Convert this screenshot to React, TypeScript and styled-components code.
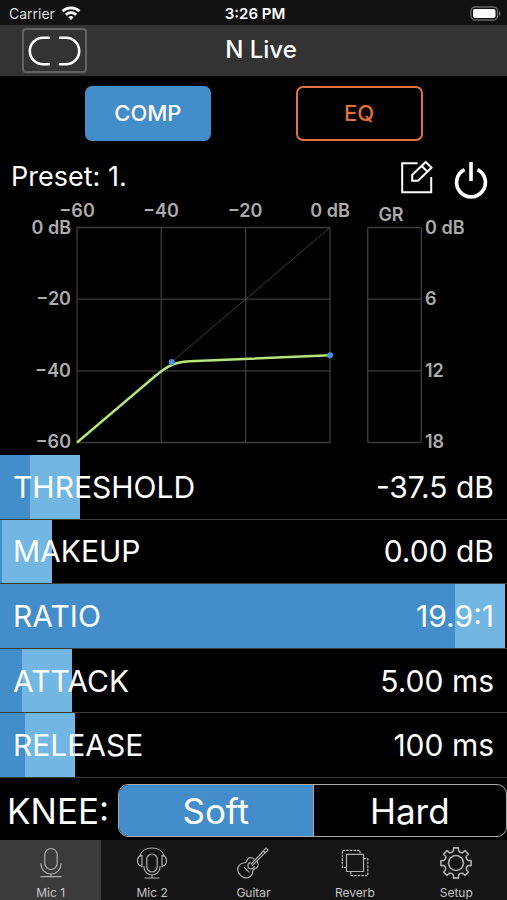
import React, { useState } from 'react';
import styled, { createGlobalStyle, css } from 'styled-components';

const BLUE = '#438dcb';
const LIGHT_BLUE = '#72b6e4';
const ORANGE = '#e2703a';

const GlobalStyle = createGlobalStyle`
  *, *::before, *::after { box-sizing: border-box; }
  body {
    margin: 0;
    background: #000;
    color: #fff;
    font-family: Inter, "Liberation Sans", sans-serif;
  }
  button, input { font: inherit; color: inherit; margin: 0; }
`;

const Page = styled.div`
  display: flex;
  flex-direction: column;
  min-height: 100vh;
`;

const StatusBar = styled.div`
  display: grid;
  grid-template-columns: 1fr auto 1fr;
  align-items: center;
  height: 25px;
  padding: 2px 6px 0 9px;
  background: #121212;
  font-size: 14px;
  line-height: 20px;
`;

const Carrier = styled.div`
  display: flex;
  align-items: center;
  gap: 6px;
  color: #ddd;
`;

const Clock = styled.time`
  font-size: 15px;
  font-weight: 600;
`;

const BatterySlot = styled.div`
  display: flex;
  justify-content: flex-end;
`;

const Header = styled.header`
  display: grid;
  grid-template-columns: 1fr auto 1fr;
  align-items: center;
  height: 51px;
  padding: 0 7px 0 22px;
  background: #333;
`;

const LinkButton = styled.button`
  display: flex;
  align-items: center;
  justify-content: center;
  justify-self: start;
  width: 65px;
  height: 45px;
  padding: 0;
  border: 2px solid #646464;
  border-radius: 4px;
  background: transparent;
`;

const Title = styled.h1`
  margin: 0;
  padding-bottom: 2px;
  font-size: 24px;
  line-height: 32px;
  font-weight: 500;
`;

const ModeRow = styled.div`
  display: flex;
  justify-content: space-evenly;
  padding: 10px 0 14px;
`;

const ModeButton = styled.button<{ $active: boolean }>`
  width: 25%;
  height: 55px;
  padding: 0 0 2px;
  border: 2px solid ${p => (p.$active ? BLUE : ORANGE)};
  border-radius: 7px;
  background: ${p => (p.$active ? BLUE : 'transparent')};
  color: ${p => (p.$active ? '#fff' : ORANGE)};
  font-size: 22px;
  font-weight: 500;
`;

const PresetRow = styled.div`
  display: flex;
  align-items: center;
  gap: 20px;
  height: 44px;
  padding: 0 19px 0 11px;
`;

const PresetName = styled.div`
  flex: 1;
  font-size: 27px;
  line-height: 36px;
`;

const IconButton = styled.button`
  display: flex;
  padding: 0;
  border: 0;
  background: none;
`;

const Chart = styled.svg`
  display: block;
  width: 100%;
  height: auto;
  overflow: visible;
`;

const AxisText = styled.text`
  fill: #acacac;
  font-size: 18px;
  font-weight: 600;
`;

const Sliders = styled.div`
  flex: 1;
  display: grid;
  grid-auto-rows: 1fr;
`;

const SliderRow = styled.div`
  display: grid;
  min-height: 56px;
  border-bottom: 1px solid #3a3a3a;
  > * { grid-area: 1 / 1; }
`;

const thumb = css`
  width: 52px;
  height: 100%;
  border: 0;
  border-left: 2px solid ${BLUE};
  border-radius: 0;
  background: ${LIGHT_BLUE};
`;

const Range = styled.input`
  -webkit-appearance: none;
  appearance: none;
  width: 100%;
  height: 100%;
  cursor: pointer;
  background: linear-gradient(
    to right,
    ${BLUE} calc((100% - 52px) * var(--level)),
    transparent 0
  );
  &::-webkit-slider-runnable-track { height: 100%; }
  &::-webkit-slider-thumb { -webkit-appearance: none; ${thumb} }
  &::-moz-range-thumb { ${thumb} }
`;

const SliderCaption = styled.div`
  z-index: 1;
  display: flex;
  align-items: center;
  justify-content: space-between;
  padding: 0 13px;
  font-size: 30px;
  line-height: 40px;
  pointer-events: none;
`;

const KneeGroup = styled.fieldset`
  display: grid;
  grid-template-columns: 118px 1fr;
  align-items: center;
  margin: 0;
  padding: 6px 0 3px;
  border: 0;
`;

const KneeLabel = styled.span`
  padding-left: 7px;
  font-size: 35px;
  line-height: 48px;
`;

const Segments = styled.div`
  display: grid;
  grid-template-columns: 1fr 1fr;
  height: 53px;
  overflow: hidden;
  border: 1px solid #aaa;
  border-radius: 10px;
`;

const Segment = styled.label`
  display: flex;
  align-items: center;
  justify-content: center;
  font-size: 35px;
  cursor: pointer;
  &:has(input:checked) { background: ${BLUE}; }
  & + & { border-left: 1px solid #aaa; }
`;

const HiddenRadio = styled.input`
  appearance: none;
  width: 0;
  height: 0;
`;

const TabBar = styled.nav`
  display: grid;
  grid-template-columns: repeat(5, 1fr);
  height: 60px;
  background: #151515;
`;

const Tab = styled.button<{ $active: boolean }>`
  display: flex;
  flex-direction: column;
  align-items: center;
  gap: 6px;
  padding: 7px 0 0;
  border: 0;
  background: ${p => (p.$active ? '#3b3b3b' : 'transparent')};
  color: #c4c4c4;
  font-size: 12px;
  line-height: 16px;
`;

const TabIcon = styled.svg`
  width: 32px;
  height: 32px;
  fill: none;
  stroke: #b0b0b0;
  stroke-width: 1.2;
  stroke-linecap: round;
  stroke-linejoin: round;
`;

const gearPath = (() => {
  const teeth = 8;
  const points: string[] = [];
  const at = (r: number, deg: number) => {
    const a = (deg * Math.PI) / 180;
    return `${(16 + r * Math.sin(a)).toFixed(2)} ${(16 - r * Math.cos(a)).toFixed(2)}`;
  };
  for (let i = 0; i < teeth; i++) {
    const c = (i * 360) / teeth;
    points.push(`${i ? 'L' : 'M'}${at(12.4, c - 12)}L${at(15.3, c - 9)}L${at(15.3, c + 9)}L${at(12.4, c + 12)}`);
    points.push(`Q${at(10.6, c + 22.5)} ${at(12.4, c + 33)}`);
  }
  return points.join('') + 'Z';
})();

const tabs = [
  {
    name: 'Mic 1',
    art: (
      <>
        <rect x="9.8" y="1.5" width="12.4" height="21" rx="6.2" />
        <path d="M6 16.5v.5a10 10 0 0 0 20 0v-.5M16 27v2.7M6 29.7h20" />
      </>
    ),
  },
  {
    name: 'Mic 2',
    art: (
      <>
        <rect x="10.8" y="7" width="10.4" height="18" rx="5.2" />
        <path d="M8 19.5v.5a8 8 0 0 0 16 0v-.5M16 28v3M9 31h14" />
        <path d="M4.2 8.6C5.5 3.6 10.5 1 16 1s10.5 2.6 11.8 7.6" />
        <path d="M6 8.3C3.2 8.6 1.5 10.5 1.5 13.8S3.2 19 6 19.3zM26 8.3c2.8.3 4.5 2.2 4.5 5.5s-1.7 5.2-4.5 5.5z" />
      </>
    ),
  },
  {
    name: 'Guitar',
    art: (
      <>
        <path d="M17 12.2C15 10.2 12.3 10.3 10.8 12c-1.2 1.4-.8 2.8-2.3 3.5-1.7.8-3.7.2-5.7 2.1-3.1 2.8-2.6 7.4.5 10.6s7.8 3.7 10.7.6c2-2.1 1.3-4.2 2.2-5.8.8-1.5 2.3-1.1 3.6-2.3 1.7-1.6 1.8-4.3.1-6.2" />
        <path d="M14.2 17 26.5 4l2.4-3 2.2 2.2-3 2.6-12.6 12.6" />
        <path d="M13.2 15.6a3.2 3.2 0 1 0 4 3.8M7.4 20.6l4.6 4.6M26.5 4l1.6 1.8" />
      </>
    ),
  },
  {
    name: 'Reverb',
    art: (
      <>
        <rect x="7.5" y="7.3" width="17" height="17.2" />
        <path strokeDasharray="1.7 1.9" d="M7 20.5H3.3V3.3H21V7" />
        <path strokeDasharray="1.7 1.9" d="M25 11.6h3.8v17H11.8V25" />
      </>
    ),
  },
  {
    name: 'Setup',
    art: (
      <>
        <path strokeWidth="1.6" d={gearPath} />
        <circle strokeWidth="1.6" cx="16" cy="16" r="7.5" />
      </>
    ),
  },
];

type Param = {
  id: string;
  label: string;
  min: number;
  max: number;
  step: number;
  start: number;
  format: (v: number) => string;
};

const params: Param[] = [
  { id: 'threshold', label: 'THRESHOLD', min: -40, max: 0, step: 0.5, start: -37.5, format: v => `${v.toFixed(1)} dB` },
  { id: 'makeup', label: 'MAKEUP', min: 0, max: 30, step: 0.25, start: 0, format: v => `${v.toFixed(2)} dB` },
  { id: 'ratio', label: 'RATIO', min: 1, max: 20, step: 0.1, start: 19.9, format: v => `${v.toFixed(1)}:1` },
  { id: 'attack', label: 'ATTACK', min: 1, max: 92, step: 0.5, start: 5, format: v => `${v.toFixed(2)} ms` },
  { id: 'release', label: 'RELEASE', min: 0, max: 2000, step: 10, start: 100, format: v => `${v} ms` },
];

function ParamSlider({ param }: { param: Param }) {
  const [value, setValue] = useState(param.start);
  const level = (value - param.min) / (param.max - param.min);
  return (
    <SliderRow>
      <Range
        id={param.id}
        type="range"
        min={param.min}
        max={param.max}
        step={param.step}
        value={value}
        aria-valuetext={param.format(value)}
        onChange={e => setValue(Number(e.target.value))}
        style={{ '--level': level } as React.CSSProperties}
      />
      <SliderCaption>
        <label htmlFor={param.id}>{param.label}</label>
        <output htmlFor={param.id}>{param.format(value)}</output>
      </SliderCaption>
    </SliderRow>
  );
}

function CompressorChart() {
  return (
    <Chart viewBox="0 198 507 256" role="img" aria-label="Compressor curve and gain reduction">
      <g fill="none" stroke="#3c3c3c" strokeWidth="1.3">
        <path d="M77 226.5H330V441.5H77ZM77 298.2H330M77 369.8H330M161.3 226.5V441.5M245.7 226.5V441.5" />
        <path d="M77 441.5 330 226.5" strokeWidth="1" />
        <rect x="367.7" y="226.5" width="53.6" height="215" rx="1" />
        <path d="M367.7 298.2h53.6M367.7 369.8h53.6" />
      </g>
      <path
        d="M77 441.5 150 379.5C164 367.5 172 361 190 360.3L330 354.3"
        fill="none"
        stroke="#b4e67c"
        strokeWidth="2.4"
      />
      <circle cx="171.7" cy="361" r="3" fill="#4f8fdf" />
      <circle cx="330" cy="354.3" r="3" fill="#4f8fdf" />
      <g textAnchor="middle">
        <AxisText x="77" y="216">−60</AxisText>
        <AxisText x="161" y="216">−40</AxisText>
        <AxisText x="245" y="216">−20</AxisText>
        <AxisText x="330" y="216">0 dB</AxisText>
        <AxisText x="391" y="220">GR</AxisText>
      </g>
      <g textAnchor="end">
        <AxisText x="71" y="233">0 dB</AxisText>
        <AxisText x="71" y="304">−20</AxisText>
        <AxisText x="71" y="376">−40</AxisText>
        <AxisText x="71" y="447">−60</AxisText>
      </g>
      <g>
        <AxisText x="425" y="233">0 dB</AxisText>
        <AxisText x="425" y="304">6</AxisText>
        <AxisText x="425" y="376">12</AxisText>
        <AxisText x="425" y="447">18</AxisText>
      </g>
    </Chart>
  );
}

export default function App() {
  const [mode, setMode] = useState('COMP');
  const [tab, setTab] = useState('Mic 1');
  return (
    <>
      <GlobalStyle />
      <Page>
        <StatusBar>
          <Carrier>
            Carrier
            <svg width="20" height="15" viewBox="0 0 20 15" fill="none" stroke="#fff" strokeWidth="2.6" aria-hidden="true">
              <path d="M1.5 5.3a12.3 12.3 0 0 1 17 0" />
              <path d="M4.8 8.7a7.6 7.6 0 0 1 10.4 0" />
              <path d="M7.3 11.2a4 4 0 0 1 5.4 0L10 14z" fill="#fff" stroke="none" />
            </svg>
          </Carrier>
          <Clock>3:26 PM</Clock>
          <BatterySlot>
            <svg width="31" height="15" viewBox="0 0 31 15" role="img" aria-label="Battery full">
              <rect x="1" y="1" width="26.5" height="13" rx="4" fill="none" stroke="#666" strokeWidth="1.3" />
              <rect x="3" y="3" width="22.5" height="9" rx="2" fill="#fff" />
              <path d="M29 5.2c1.8.6 1.8 4 0 4.6z" fill="#777" />
            </svg>
          </BatterySlot>
        </StatusBar>

        <Header>
          <LinkButton aria-label="Stereo link">
            <svg width="54" height="30" viewBox="0 0 54 30" fill="none" stroke="#fff" strokeWidth="2.6" strokeLinecap="round">
              <path d="M21 1.8h-6a13.2 13.2 0 0 0 0 26.4h6M32 1.8h6a13.2 13.2 0 0 1 0 26.4h-6" />
            </svg>
          </LinkButton>
          <Title>N Live</Title>
        </Header>

        <ModeRow>
          {['COMP', 'EQ'].map(name => (
            <ModeButton key={name} $active={mode === name} aria-pressed={mode === name} onClick={() => setMode(name)}>
              {name}
            </ModeButton>
          ))}
        </ModeRow>

        <PresetRow>
          <PresetName>Preset: 1.</PresetName>
          <IconButton aria-label="Edit preset">
            <svg width="34" height="34" viewBox="0 0 34 34" fill="none" stroke="#fff" strokeWidth="2">
              <path d="M17.5 3.2H2.2V32.2H31.2V17" />
              <path d="M12.2 20.8v-5.8L25.7 2l5.8 5.8L18 20.8zM21.7 6l5.8 5.7" />
            </svg>
          </IconButton>
          <IconButton aria-label="Power">
            <svg width="34" height="44" viewBox="0 0 34 44" fill="none" stroke="#fff" strokeWidth="3.6">
              <path d="M10.5 14.6a14.4 14.4 0 1 0 13 0" />
              <path d="M17 7v19" />
            </svg>
          </IconButton>
        </PresetRow>

        <CompressorChart />

        <Sliders>
          {params.map(p => (
            <ParamSlider key={p.id} param={p} />
          ))}
        </Sliders>

        <KneeGroup aria-labelledby="knee-label">
          <KneeLabel id="knee-label">KNEE:</KneeLabel>
          <Segments>
            <Segment>
              <HiddenRadio type="radio" name="knee" value="soft" defaultChecked />
              Soft
            </Segment>
            <Segment>
              <HiddenRadio type="radio" name="knee" value="hard" />
              Hard
            </Segment>
          </Segments>
        </KneeGroup>

        <TabBar>
          {tabs.map(t => (
            <Tab
              key={t.name}
              $active={tab === t.name}
              aria-current={tab === t.name ? 'page' : undefined}
              onClick={() => setTab(t.name)}
            >
              <TabIcon viewBox="0 0 32 32" aria-hidden="true">{t.art}</TabIcon>
              {t.name}
            </Tab>
          ))}
        </TabBar>
      </Page>
    </>
  );
}
